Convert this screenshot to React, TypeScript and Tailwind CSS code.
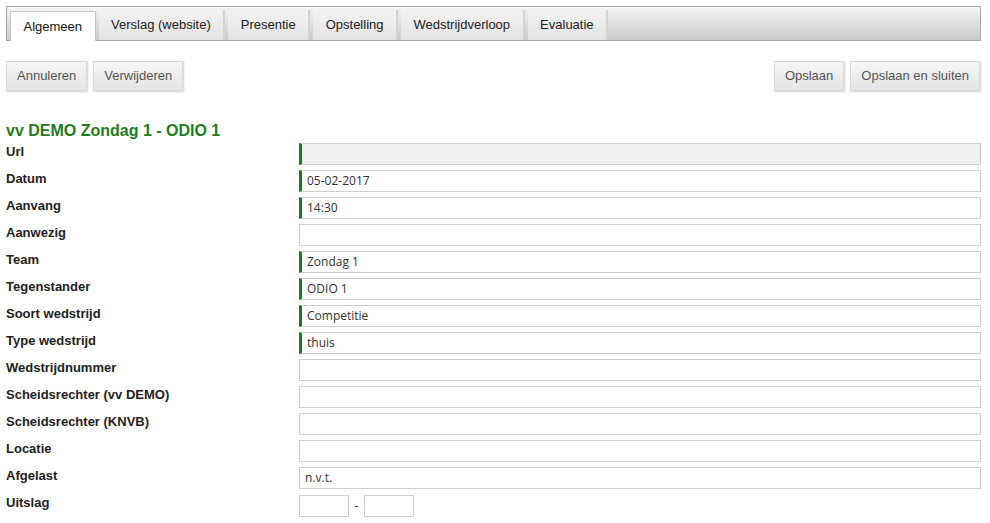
import React from 'react';

const tabs = ['Algemeen', 'Verslag (website)', 'Presentie', 'Opstelling', 'Wedstrijdverloop', 'Evaluatie'];

type Row = { label: string; value?: string; required?: boolean; disabled?: boolean };

const rows: Row[] = [
    { label: 'Url', required: true, disabled: true },
    { label: 'Datum', value: '05-02-2017', required: true },
    { label: 'Aanvang', value: '14:30', required: true },
    { label: 'Aanwezig' },
    { label: 'Team', value: 'Zondag 1', required: true },
    { label: 'Tegenstander', value: 'ODIO 1', required: true },
    { label: 'Soort wedstrijd', value: 'Competitie', required: true },
    { label: 'Type wedstrijd', value: 'thuis', required: true },
    { label: 'Wedstrijdnummer' },
    { label: 'Scheidsrechter (vv DEMO)' },
    { label: 'Scheidsrechter (KNVB)' },
    { label: 'Locatie' },
    { label: 'Afgelast', value: 'n.v.t.' },
];

function Btn({ children }: { children: React.ReactNode }) {
    return (
        <button className="h-[30px] px-[10px] border border-[#d8d8d8] bg-gradient-to-b from-[#f6f6f6] to-[#e4e4e4] text-[13px] text-[#555] shadow-[1px_1px_2px_rgba(0,0,0,0.18)]">
            {children}
        </button>
    );
}

export default function App() {
    return (
        <div className="w-[990px] h-[523px] bg-white overflow-hidden font-['Liberation_Sans',sans-serif] text-[#222]">
            <div className="pt-[6px] px-[6px] pr-[9px]">
                {/* tabs */}
                <div className="h-[35px] border border-[#a8a8a8] bg-gradient-to-b from-[#f4f4f4] to-[#c9c9c9] flex items-end pl-[3px] gap-[3px]">
                    {tabs.map((t, i) => (
                        <div
                            key={t}
                            className={
                                i === 0
                                    ? 'h-[30px] mb-[-1px] px-[12.5px] bg-white border-t border-l border-r border-[#c8c8c8] text-[13px] text-[#111] flex items-center'
                                    : 'h-[30px] px-[12.5px] bg-gradient-to-b from-[#f3f3f3] to-[#e3e3e3] border-r-2 border-[#d2d2d2] text-[13px] text-[#222] flex items-center'
                            }
                        >
                            {t}
                        </div>
                    ))}
                </div>

                {/* buttons */}
                <div className="flex justify-between mt-[20px]">
                    <div className="flex gap-[6px]">
                        <Btn>Annuleren</Btn>
                        <Btn>Verwijderen</Btn>
                    </div>
                    <div className="flex gap-[6px] mr-[1px]">
                        <Btn>Opslaan</Btn>
                        <Btn>Opslaan en sluiten</Btn>
                    </div>
                </div>

                <h1 className="mt-[30px] text-[16px] leading-[20px] font-bold text-[#1e7d1e]">vv DEMO Zondag 1 - ODIO 1</h1>

                <div className="flex flex-col mt-[-1px]">
                    {rows.map((r) => (
                        <div key={r.label} className="flex h-[27px]">
                            <div className="w-[293px] pt-[4px] text-[13px] font-bold text-[#222] leading-[15px]">{r.label}</div>
                            <div
                                className={
                                    'mt-[3px] h-[22px] flex-1 border border-[#cfcfcf] flex items-center pl-[5px] text-[12px] text-[#333] font-["Open_Sans",sans-serif] ' +
                                    (r.required ? 'border-l-[3px] border-l-[#1d7a1d] ' : '') +
                                    (r.disabled ? 'bg-[#f0f0f0]' : 'bg-white')
                                }
                            >
                                {r.value}
                            </div>
                        </div>
                    ))}
                    <div className="flex h-[27px]">
                        <div className="w-[293px] pt-[4px] text-[13px] font-bold text-[#222] leading-[15px]">Uitslag</div>
                        <div className="mt-[3px] flex items-center">
                            <div className="w-[50px] h-[22px] border border-[#cfcfcf]" />
                            <span className="w-[15px] text-center text-[12px] text-[#333]">-</span>
                            <div className="w-[50px] h-[22px] border border-[#cfcfcf]" />
                        </div>
                    </div>
                </div>
            </div>
        </div>
    );
}
